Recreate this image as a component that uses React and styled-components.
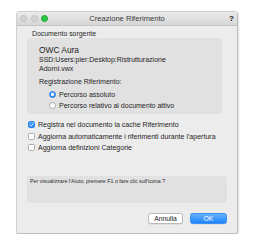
import React from "react";
import styled, { createGlobalStyle } from "styled-components";

const Global = createGlobalStyle`
  html, body { margin: 0; padding: 0; background: #ffffff; }
  body { font-family: "Liberation Sans", Arial, sans-serif; color: #1e1e1e; }
`;

const Page = styled.div`
  padding: 11px 0 0 16px;
`;

const Window = styled.div`
  width: 222px;
  height: 223px;
  box-sizing: border-box;
  background: #ececec;
  border: 1px solid #cfcfcf;
  border-right-color: #bdbdbd;
  border-bottom-color: #bdbdbd;
  border-radius: 4px 4px 2px 2px;
  box-shadow: 1px 1px 2px rgba(0,0,0,0.12);
  display: flex;
  flex-direction: column;
  overflow: hidden;
`;

const TitleBar = styled.div`
  height: 13px;
  display: grid;
  grid-template-columns: 40px 1fr 40px;
  align-items: center;
  background: linear-gradient(#ebebeb, #d6d6d6);
  border-bottom: 1px solid #c4c4c4;
`;

const Lights = styled.div`
  display: flex;
  gap: 3.5px;
  padding-left: 3px;
`;

const Light = styled.span`
  width: 7px;
  height: 7px;
  border-radius: 50%;
  box-sizing: border-box;
  background: ${p => (p.$on ? "#2bc840" : "#d3d3d3")};
  border: 0.5px solid ${p => (p.$on ? "#1ea530" : "#c2c2c2")};
`;

const Title = styled.div`
  text-align: center;
  font-size: 7.6px;
  color: #3a3a3a;
`;

const Help = styled.div`
  text-align: right;
  padding-right: 3px;
  font-size: 8px;
  font-weight: bold;
  color: #222;
`;

const Body = styled.div`
  padding: 3px 11px 0 10px;
  display: flex;
  flex-direction: column;
`;

const SectionLabel = styled.div`
  font-size: 6.9px;
  line-height: 9px;
  padding-left: 5px;
`;

const Group = styled.div`
  width: 195px;
  box-sizing: border-box;
  background: #e1e1e1;
  border-radius: 3px;
  padding: 7px 0 3px 12px;
`;

const DocName = styled.div`
  font-size: 8.4px;
  line-height: 10px;
`;

const PathLine = styled.div`
  font-size: 7px;
  line-height: 9px;
`;

const SubLabel = styled.div`
  font-size: 7px;
  line-height: 9px;
  margin-top: 4px;
`;

const Options = styled.div`
  margin: 3px 0 0 10px;
  display: flex;
  flex-direction: column;
`;

const OptRow = styled.label`
  display: flex;
  align-items: center;
  gap: 3px;
  height: 11px;
  font-size: 7px;
`;

const Radio = styled.span`
  width: 7px;
  height: 7px;
  border-radius: 50%;
  box-sizing: border-box;
  display: flex;
  align-items: center;
  justify-content: center;
  background: ${p => (p.$on ? "linear-gradient(#5aaaff, #1f7ff5)" : "#ffffff")};
  border: 0.5px solid ${p => (p.$on ? "#2a7fe6" : "#a9a9a9")};
  &::after {
    content: "";
    width: 2.4px;
    height: 2.4px;
    border-radius: 50%;
    background: #fff;
    display: ${p => (p.$on ? "block" : "none")};
  }
`;

const Checks = styled.div`
  margin-top: 5px;
  display: flex;
  flex-direction: column;
`;

const CheckRow = styled.label`
  display: flex;
  align-items: center;
  gap: 3px;
  height: 11.5px;
  padding-left: 1px;
  font-size: 7.05px;
`;

const Box = styled.span`
  width: 7px;
  height: 7px;
  border-radius: 1.5px;
  box-sizing: border-box;
  display: flex;
  align-items: center;
  justify-content: center;
  background: ${p => (p.$on ? "linear-gradient(#5aaaff, #1f7ff5)" : "#ffffff")};
  border: 0.5px solid ${p => (p.$on ? "#2a7fe6" : "#ababab")};
`;

const InfoBox = styled.div`
  margin-top: 22px;
  width: 200px;
  height: 27px;
  box-sizing: border-box;
  background: #e1e1e1;
  border-radius: 3px;
  padding: 2px 3px;
  font-size: 5.3px;
  line-height: 6px;
  color: #2a2a2a;
`;

const Buttons = styled.div`
  margin-top: 10px;
  width: 200px;
  display: flex;
  justify-content: flex-end;
  gap: 7px;
`;

const Button = styled.button`
  width: ${p => p.$w}px;
  height: 11px;
  padding: 0;
  box-sizing: border-box;
  border-radius: 2.5px;
  font-family: "Liberation Sans", Arial, sans-serif;
  font-size: 6.8px;
  line-height: 10px;
  color: ${p => (p.$primary ? "#ffffff" : "#222")};
  background: ${p => (p.$primary ? "linear-gradient(#69b1fc, #1a83fb)" : "#ffffff")};
  border: 0.5px solid ${p => (p.$primary ? "#3d8ff0" : "#b9b9b9")};
  box-shadow: 0 0.5px 0.5px rgba(0,0,0,0.12);
`;

const Check = () => (
  <svg width="6" height="6" viewBox="0 0 10 10">
    <path d="M2 5.2 L4.2 7.5 L8.3 2.4" fill="none" stroke="#fff" strokeWidth="1.6" strokeLinecap="round" strokeLinejoin="round" />
  </svg>
);

export default function App() {
  return (
    <>
      <Global />
      <Page>
        <Window>
          <TitleBar>
            <Lights>
              <Light />
              <Light />
              <Light $on />
            </Lights>
            <Title>Creazione Riferimento</Title>
            <Help>?</Help>
          </TitleBar>
          <Body>
            <SectionLabel>Documento sorgente</SectionLabel>
            <Group>
              <DocName>OWC Aura</DocName>
              <PathLine>SSD:Users:pier:Desktop:Ristrutturazione</PathLine>
              <PathLine>Adorni.vwx</PathLine>
              <SubLabel>Registrazione Riferimento:</SubLabel>
              <Options>
                <OptRow><Radio $on />Percorso assoluto</OptRow>
                <OptRow><Radio />Percorso relativo al documento attivo</OptRow>
              </Options>
            </Group>
            <Checks>
              <CheckRow><Box $on><Check /></Box>Registra nel documento la cache Riferimento</CheckRow>
              <CheckRow><Box />Aggiorna automaticamente i riferimenti durante l'apertura</CheckRow>
              <CheckRow><Box />Aggiorna definizioni Categorie</CheckRow>
            </Checks>
            <InfoBox>Per visualizzare l'Aiuto, premere F1 o fare clic sull'icona ?</InfoBox>
            <Buttons>
              <Button $w={35}>Annulla</Button>
              <Button $w={37} $primary>OK</Button>
            </Buttons>
          </Body>
        </Window>
      </Page>
    </>
  );
}
